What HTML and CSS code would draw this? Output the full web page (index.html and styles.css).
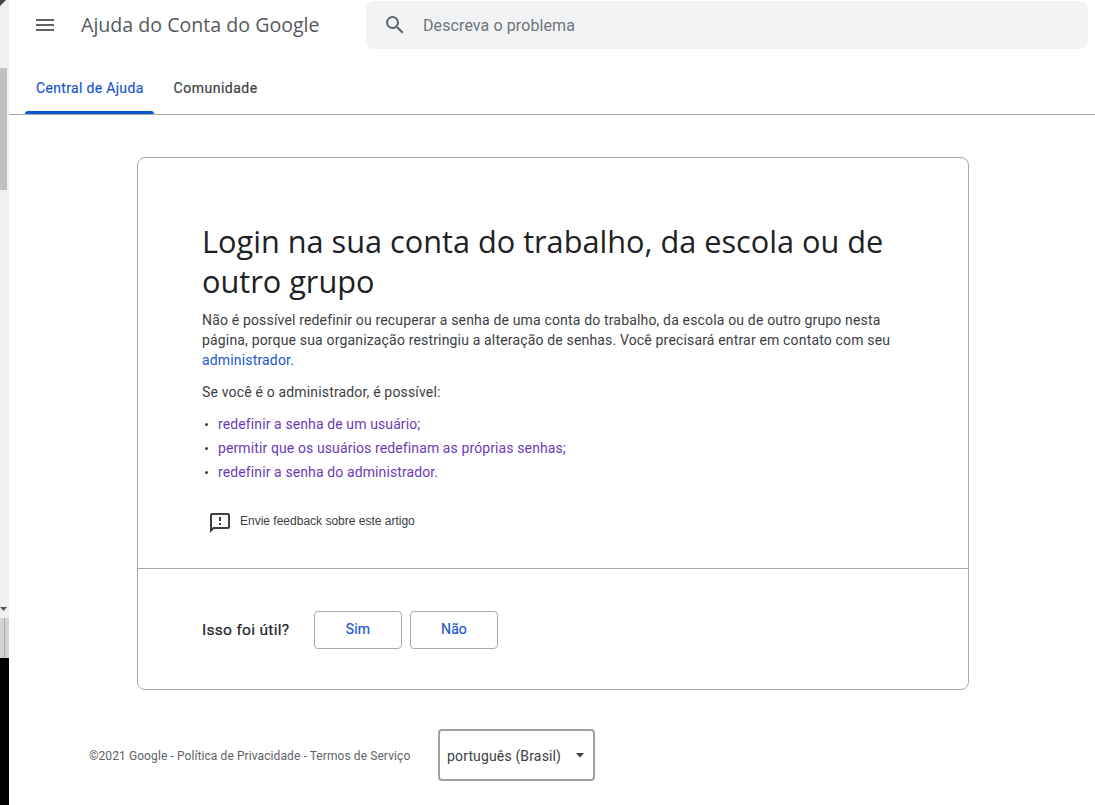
FILE: index.html
```html
<!DOCTYPE html>
<html lang="pt-BR">
<head>
<meta charset="utf-8">
<title>Ajuda do Conta do Google</title>
<link rel="stylesheet" href="styles.css">
</head>
<body>
<div class="page">
  <aside class="strip">
    <div class="track">
      <svg class="arrow-up" width="9" height="8" viewBox="0 0 9 8"><path d="M0 0h6L0 6z" fill="#444"/></svg>
      <div class="thumb"></div>
      <svg class="arrow-down" width="9" height="6" viewBox="0 0 9 6"><path d="M0 1h7L3.500 5z" fill="#555"/></svg>
    </div>
    <div class="strip-gray"><div class="strip-line"></div></div>
    <div class="strip-black"></div>
  </aside>
  <main class="main">
    <header class="topbar">
      <svg class="menu-icon" width="24" height="24" viewBox="0 0 24 24"><path d="M3 18h18v-2H3v2zm0-5h18v-2H3v2zm0-7v2h18V6H3z" fill="#5f6368"/></svg>
      <div class="product">Ajuda do Conta do Google</div>
      <div class="search">
        <svg class="search-icon" width="24" height="24" viewBox="0 0 24 24"><path d="M15.500 14h-.79l-.28-.27A6.471 6.471 0 0 0 16 9.500 6.500 6.500 0 1 0 9.500 16c1.610 0 3.090-.59 4.230-1.570l.27.28v.79l5 4.990L20.490 19l-4.990-5zm-6 0C7.010 14 5 11.990 5 9.500S7.010 5 9.500 5 14 7.010 14 9.500 11.990 14 9.500 14z" fill="#5f6368"/></svg>
        <span class="search-text">Descreva o problema</span>
      </div>
    </header>
    <nav class="tabs">
      <a class="tab tab-active">Central de Ajuda</a>
      <a class="tab tab-plain">Comunidade</a>
    </nav>
    <section class="card">
      <div class="article">
        <h1 class="title">Login na sua conta do trabalho, da escola ou de outro grupo</h1>
        <p class="para">Não é possível redefinir ou recuperar a senha de uma conta do trabalho, da escola ou de outro grupo nesta página, porque sua organização restringiu a alteração de senhas. Você precisará entrar em contato com seu <a class="link">administrador</a>.</p>
        <p class="para para-second">Se você é o administrador, é possível:</p>
        <ul class="list">
          <li><a class="visited">redefinir a senha de um usuário;</a></li>
          <li><a class="visited">permitir que os usuários redefinam as próprias senhas;</a></li>
          <li><a class="visited">redefinir a senha do administrador.</a></li>
        </ul>
        <div class="feedback">
          <svg class="feedback-icon" width="24" height="24" viewBox="0 0 24 24"><path d="M20 2H4c-1.100 0-2 .9-2 2v18l4-4h14c1.100 0 2-.9 2-2V4c0-1.100-.9-2-2-2zm0 14H5.170L4 17.170V4h16v12zM11 12h2v2h-2zm0-6h2v4h-2z" fill="#3c4043"/></svg>
          <span>Envie feedback sobre este artigo</span>
        </div>
      </div>
      <div class="helpful">
        <span class="helpful-label">Isso foi útil?</span>
        <button class="btn">Sim</button>
        <button class="btn">Não</button>
      </div>
    </section>
    <footer class="footer">
      <div class="legal">©2021 Google - Política de Privacidade - Termos de Serviço</div>
      <div class="lang">
        <span>português (Brasil)</span>
        <svg width="10" height="5" viewBox="0 0 10 5"><path d="M1 0h8L5 4.500z" fill="#3c4043"/></svg>
      </div>
    </footer>
  </main>
</div>
</body>
</html>
```
FILE: styles.css
```css
* { box-sizing: border-box; }
html, body { margin: 0; height: 100%; background: #fff; overflow: hidden; }
body { font-family: Roboto, "Noto Sans", sans-serif; color: #3c4043; }
.page { display: flex; height: 805px; }

.strip { width: 9px; flex: none; display: flex; flex-direction: column; }
.track { height: 618px; background: #f0f0f0; display: flex; flex-direction: column; }
.arrow-up { flex: none; }
.thumb { width: 7px; height: 122px; margin-top: 60px; background: #c1c1c1; }
.arrow-down { flex: none; margin-top: auto; margin-bottom: 6px; }
.strip-gray { height: 40px; background: #d4d4d4; }
.strip-line { width: 1px; height: 100%; margin-left: 4px; background: #a8a8a8; }
.strip-black { flex: 1; background: #000; }

.main { flex: 1; min-width: 0; }

.topbar { height: 50px; display: flex; align-items: center; }
.menu-icon { margin-left: 24px; flex: none; }
.product { margin-left: 24px; width: 285px; padding-bottom: 2px; font-family: "Open Sans", sans-serif; font-size: 19.600px; color: #55595d; white-space: nowrap; }
.search { width: 722px; height: 48px; display: flex; align-items: center; background: #f1f3f4; border-radius: 8px; }
.search-icon { margin-left: 17px; flex: none; }
.search-text { margin-left: 16px; font-size: 16px; letter-spacing: .1px; color: #70757a; }

.tabs { height: 65px; padding: 15px 0 0 16px; display: flex; border-bottom: 1px solid #aaa; }
.tab { height: 49px; padding: 0 10px 0 11px; margin-right: 9px; font-size: 14px; font-weight: 400; -webkit-text-stroke: .2px; letter-spacing: .33px; line-height: 47px; color: #3c4043; position: relative; }
.tab-plain { letter-spacing: .5px; }
.tab-active { color: #1a56cf; }
.tab-active::after { content: ""; position: absolute; left: 0; right: 0; bottom: 0; height: 3px; background: #0b57d0; border-radius: 3px 3px 0 0; }

.card { margin: 42px 0 0 128px; width: 832px; height: 533px; border: 1px solid #aaa; border-radius: 8px; display: flex; flex-direction: column; }
.article { height: 411px; padding: 63px 64px 0; border-bottom: 1px solid #aaa; }
.title { margin: 0; font-family: "Open Sans", sans-serif; font-size: 30.700px; font-weight: 400; line-height: 40px; color: #202124; }
.para { margin: 9px 0 0; font-size: 14px; line-height: 20px; letter-spacing: .165px; color: #3c4043; }
.para-second { margin-top: 12px; }
.link { color: #1a56cf; }
.visited { color: #6b3bb5; }
.list { list-style: none; margin: 10px 0 0; padding: 0; font-size: 14px; line-height: 24px; letter-spacing: .11px; }
.list li { padding-left: 16px; position: relative; }
.list li::before { content: ""; position: absolute; left: 3px; top: 11px; width: 3px; height: 3px; border-radius: 50%; background: #3c4043; }
.feedback { margin-top: 25px; margin-left: 6px; height: 24px; display: flex; align-items: center; gap: 8px; font-family: "Liberation Sans", sans-serif; font-size: 12px; color: #3c4043; }
.feedback-icon { margin-top: 4px; }

.helpful { flex: 1; padding: 2px 0 0 64px; display: flex; align-items: center; }
.helpful-label { width: 112px; font-size: 15.500px; font-weight: 400; -webkit-text-stroke: .2px; letter-spacing: .3px; color: #202124; }
.btn { width: 88px; height: 38px; margin-right: 8px; background: #fff; border: 1px solid #aaa; border-radius: 4px; font: 400 14px Roboto, sans-serif; -webkit-text-stroke: .2px; letter-spacing: .1px; color: #1a56cf; padding: 0 0 2px; }

.footer { margin: 39px 0 0 80px; display: flex; align-items: center; }
.legal { width: 349px; padding-top: 1px; font-size: 12px; letter-spacing: .09px; color: #5f6368; white-space: nowrap; }
.lang { width: 157px; height: 52px; padding: 1px 8px 0 7px; display: flex; align-items: center; justify-content: space-between; border: 2px solid #a0a0a0; border-radius: 4px; font-size: 14px; letter-spacing: .15px; color: #3c4043; }
```
